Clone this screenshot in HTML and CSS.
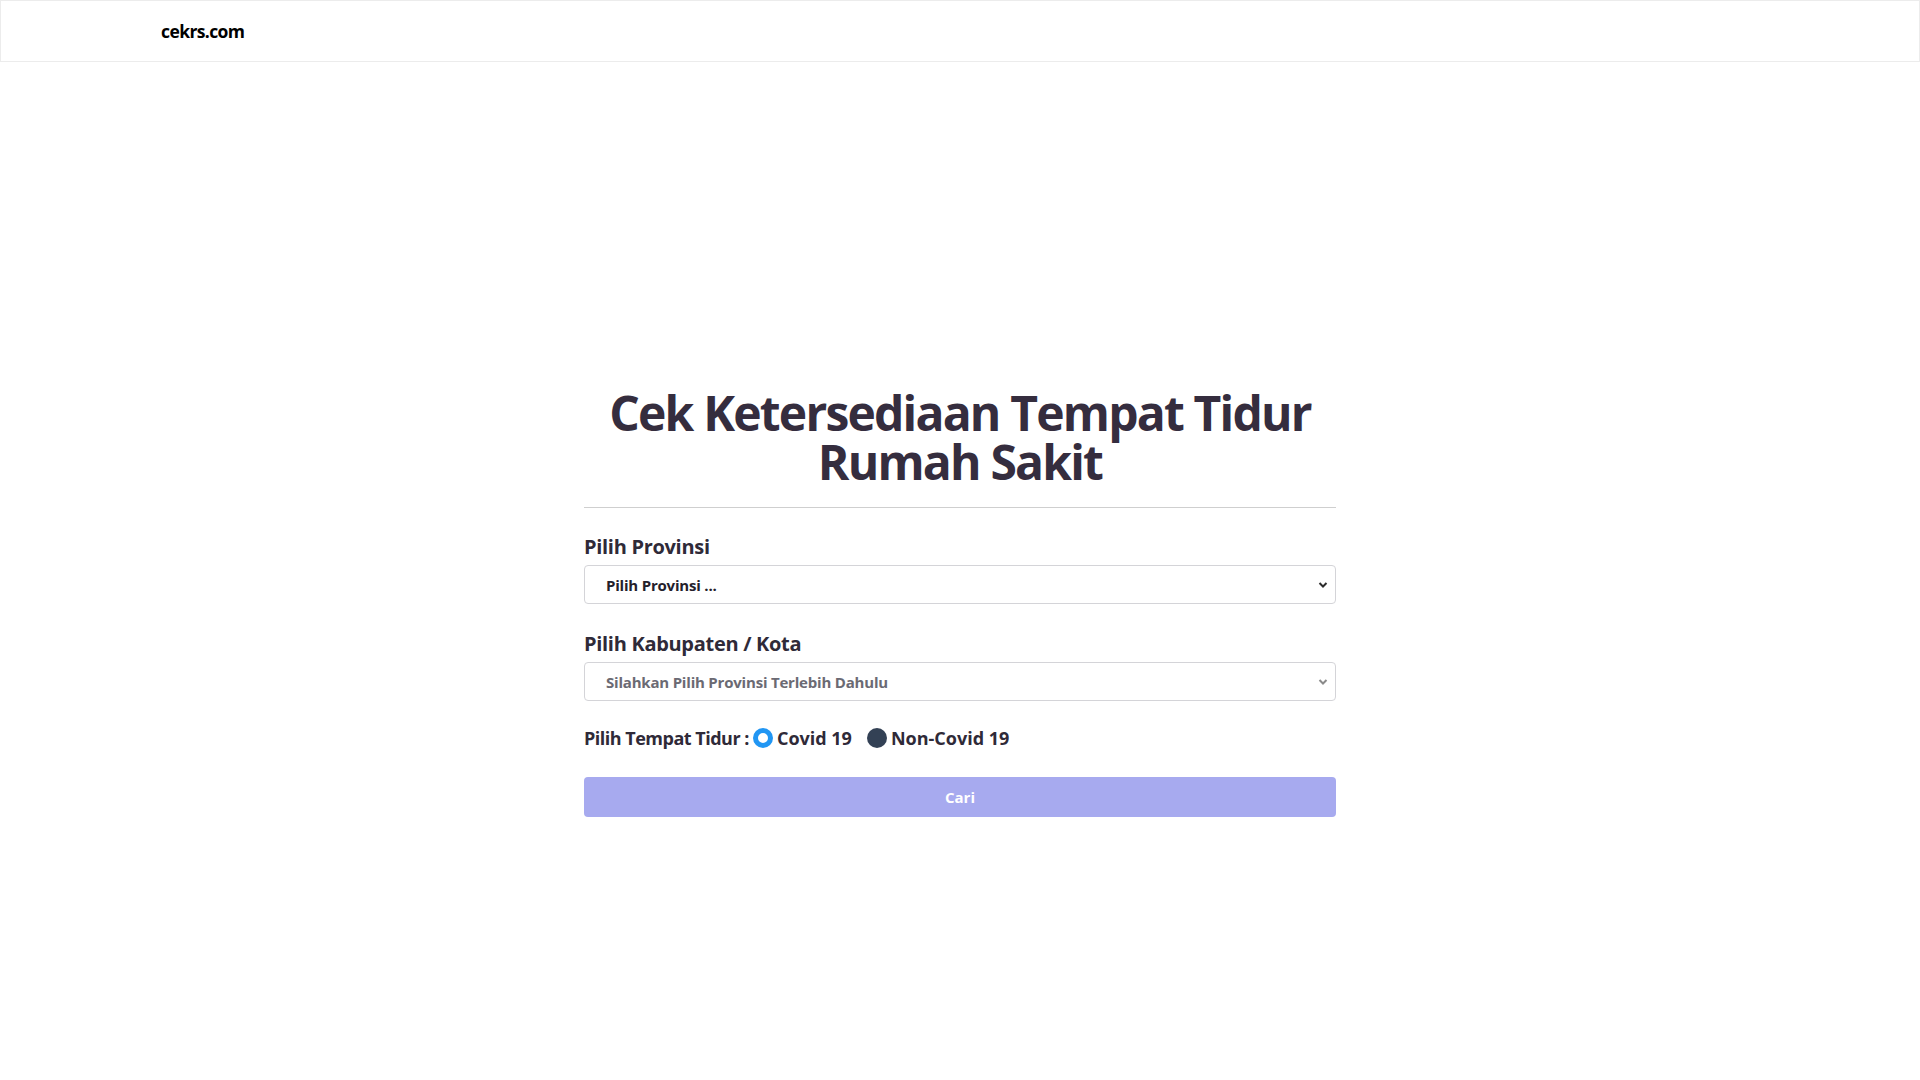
FILE: index.html
```html
<!DOCTYPE html>
<html lang="id">
<head>
<meta charset="utf-8">
<title>cekrs.com</title>
<link rel="stylesheet" href="styles.css">
</head>
<body>
<header class="topbar">
  <div class="brand">cekrs.com</div>
</header>
<main class="main">
  <section class="panel">
    <h1 class="title"><span class="title-line">Cek Ketersediaan Tempat Tidur</span><span class="title-line">Rumah Sakit</span></h1>
    <hr class="divider">
    <div class="field">
      <label class="label">Pilih Provinsi</label>
      <div class="select-wrap">
        <div class="select">Pilih Provinsi ...</div>
        <svg class="chev" width="10" height="8" viewBox="0 0 10 8"><path d="M1.5 2 L5 5.5 L8.5 2" fill="none" stroke="#2b2b2b" stroke-width="2"/></svg>
      </div>
    </div>
    <div class="field field-2">
      <label class="label">Pilih Kabupaten / Kota</label>
      <div class="select-wrap">
        <div class="select muted">Silahkan Pilih Provinsi Terlebih Dahulu</div>
        <svg class="chev" width="10" height="8" viewBox="0 0 10 8"><path d="M1.5 2 L5 5.5 L8.5 2" fill="none" stroke="#8a8a8a" stroke-width="2"/></svg>
      </div>
    </div>
    <div class="radios">
      <span class="radio-label">Pilih Tempat Tidur :</span>
      <span class="radio checked"></span><span class="opt">Covid 19</span>
      <span class="radio dark"></span><span class="opt">Non-Covid 19</span>
    </div>
    <button class="btn">Cari</button>
  </section>
</main>
</body>
</html>
```
FILE: styles.css
```css
* { box-sizing: border-box; }
html, body { margin: 0; padding: 0; background: #ffffff; }
body { font-family: "Open Sans", "Noto Sans", sans-serif; color: #2f2a38; }

.topbar {
  height: 62px;
  border: 1px solid #ececec;
  display: flex;
  align-items: center;
  padding-left: 160px;
}
.brand { font-size: 17.5px; font-weight: 700; color: #000; letter-spacing: -0.6px; }

.main { display: flex; justify-content: center; padding-top: 326px; }
.panel { width: 752px; }

.title {
  margin: 0;
  text-align: center;
  font-size: 48px;
  font-weight: 700;
  color: #352d3e;
  letter-spacing: -1.8px;
}
.title-line { display: block; height: 49px; line-height: 49px; }
.divider { border: 0; border-top: 1px solid #cfcfcf; margin: 21px 0 0; }

.field { margin-top: 25px; }
.field-2 { margin-top: 26px; }
.label { display: block; font-size: 20px; font-weight: 700; line-height: 28px; color: #2f2a38; letter-spacing: -0.3px; }
.select-wrap { position: relative; margin-top: 4px; }
.select {
  height: 39px;
  border: 1px solid #d4d4d8;
  border-radius: 4px;
  padding-left: 21px;
  display: flex;
  align-items: center;
  font-size: 15px;
  font-weight: 700;
  color: #24202b;
  letter-spacing: -0.2px;
}
.select.muted { color: #6b6a73; }
.chev { position: absolute; right: 8px; top: 16px; }

.radios { display: flex; align-items: center; margin-top: 25px; font-size: 18px; font-weight: 700; line-height: 24px; }
.radio-label { margin-right: 4px; letter-spacing: -0.5px; }
.radio { width: 20px; height: 20px; border-radius: 50%; flex: none; }
.radio.checked { border: 5px solid #2196f3; background: #fff; }
.radio.dark { background: #334155; margin-left: 15px; }
.opt { margin-left: 4px; letter-spacing: 0; }

.btn {
  display: block;
  width: 100%;
  height: 40px;
  margin-top: 27px;
  border: 0;
  border-radius: 4px;
  background: #a7aaef;
  color: #ffffff;
  font-family: inherit;
  font-size: 15px;
  font-weight: 700;
}
```
